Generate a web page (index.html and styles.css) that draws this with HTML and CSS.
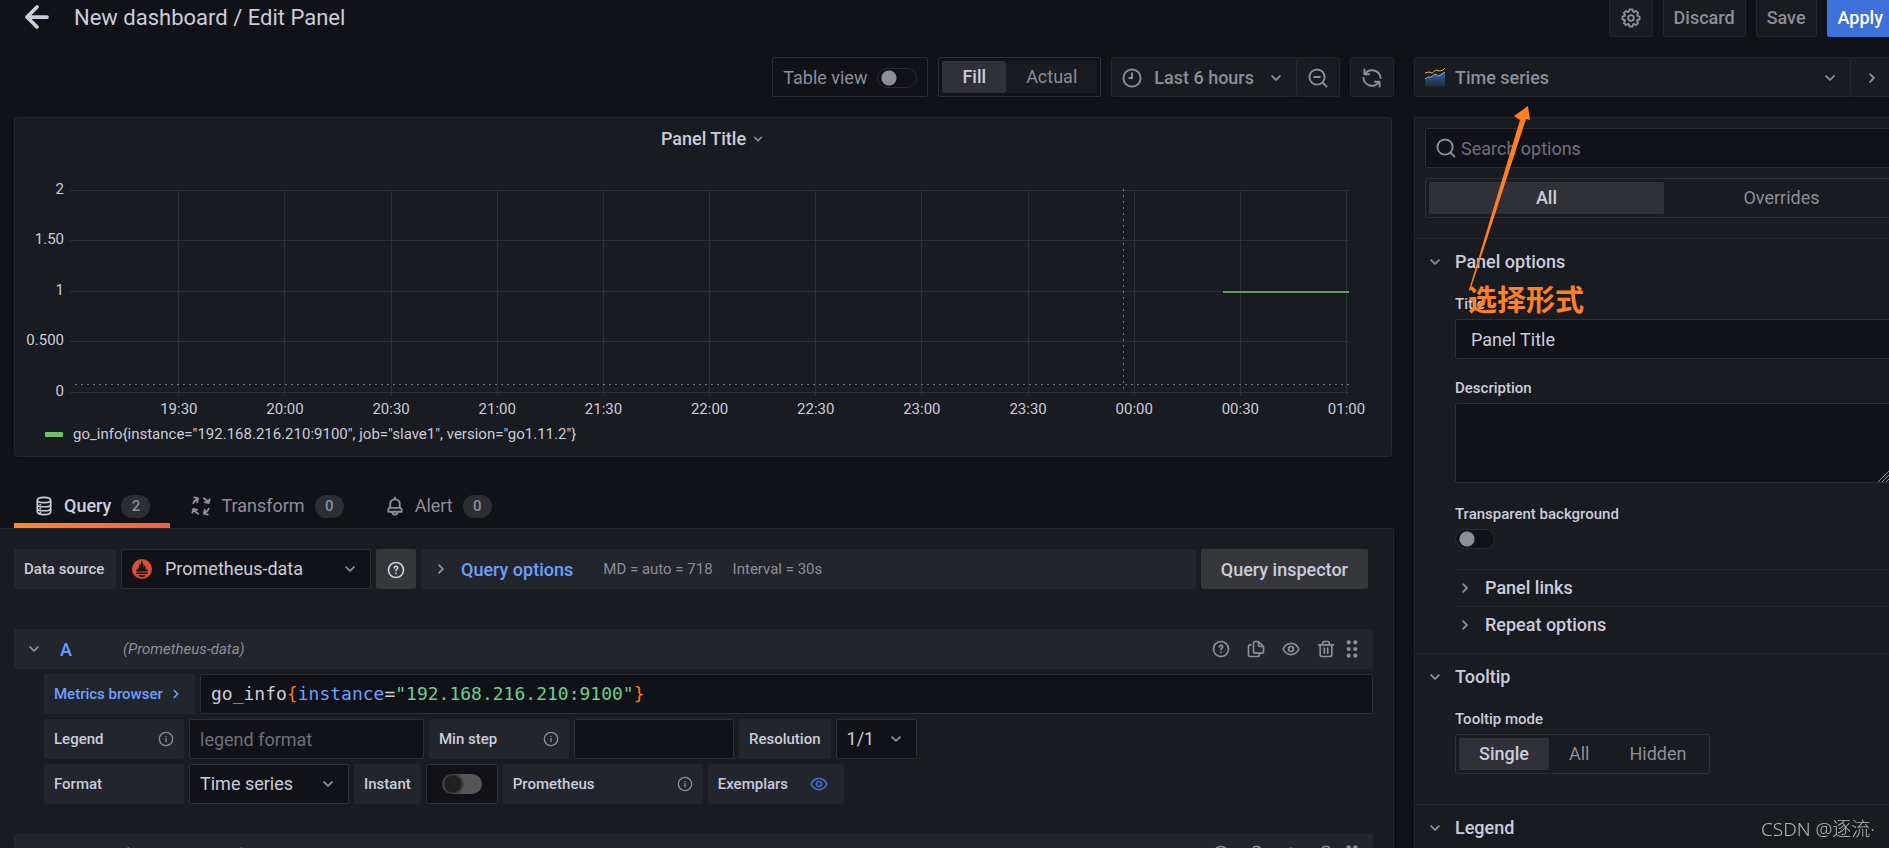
FILE: index.html
```
<!DOCTYPE html>
<html lang="en">

<head>
    <meta charset="utf-8" />
    <title>New dashboard / Edit Panel</title>
    <link rel="stylesheet" href="styles.css">
</head>

<body>
    <!-- icon sprite -->
    <svg class="sprite" aria-hidden="true">
        <symbol id="arrow-left" viewBox="0 0 24 24"><path d="M20 12H5M12 4l-8 8 8 8" fill="none" stroke="currentColor" stroke-width="3" stroke-linecap="round" stroke-linejoin="round" /></symbol>
        <symbol id="angle-down" viewBox="1 1 22 22"><path d="M17,9.17a1,1,0,0,0-1.41,0L12,12.71,8.46,9.17a1,1,0,0,0-1.41,0,1,1,0,0,0,0,1.42l4.24,4.24a1,1,0,0,0,1.42,0L17,10.59A1,1,0,0,0,17,9.17Z" /></symbol>
        <symbol id="angle-right" viewBox="1 1 22 22"><path d="M14.83,11.29,10.59,7.05a1,1,0,0,0-1.42,0,1,1,0,0,0,0,1.41L12.71,12,9.17,15.54a1,1,0,0,0,0,1.41,1,1,0,0,0,.71.29,1,1,0,0,0,.71-.29l4.24-4.24A1,1,0,0,0,14.83,11.29Z" /></symbol>
        <symbol id="cog" viewBox="1.5 1.5 21 21"><path d="M21.32,9.55l-1.89-.63.89-1.78A1,1,0,0,0,20.13,6L18,3.87a1,1,0,0,0-1.15-.19l-1.78.89-.63-1.89A1,1,0,0,0,13.5,2h-3a1,1,0,0,0-.95.68L8.92,4.57,7.14,3.68A1,1,0,0,0,6,3.87L3.87,6a1,1,0,0,0-.19,1.15l.89,1.78-1.89.63A1,1,0,0,0,2,10.5v3a1,1,0,0,0,.68.95l1.89.63-.89,1.78A1,1,0,0,0,3.87,18L6,20.13a1,1,0,0,0,1.15.19l1.78-.89.63,1.89a1,1,0,0,0,.95.68h3a1,1,0,0,0,.95-.68l.63-1.89,1.78.89A1,1,0,0,0,18,20.13L20.13,18a1,1,0,0,0,.19-1.15l-.89-1.78,1.89-.63A1,1,0,0,0,22,13.5v-3A1,1,0,0,0,21.32,9.55ZM20,12.78l-1.2.4A2,2,0,0,0,17.64,16l.57,1.14-1.1,1.1L16,17.64a2,2,0,0,0-2.79,1.16l-.4,1.2H11.22l-.4-1.2A2,2,0,0,0,8,17.64l-1.14.57-1.1-1.1L6.36,16A2,2,0,0,0,5.2,13.18L4,12.78V11.22l1.2-.4A2,2,0,0,0,6.36,8L5.79,6.89l1.1-1.1L8,6.36A2,2,0,0,0,10.82,5.2l.4-1.2h1.56l.4,1.2A2,2,0,0,0,16,6.36l1.14-.57,1.1,1.1L17.64,8a2,2,0,0,0,1.16,2.79l1.2.4ZM12,8a4,4,0,1,0,4,4A4,4,0,0,0,12,8Zm0,6a2,2,0,1,1,2-2A2,2,0,0,1,12,14Z" /></symbol>
        <symbol id="clock" viewBox="1.5 1.5 21 21"><g fill="none" stroke="currentColor" stroke-width="2" stroke-linecap="round"><circle cx="12" cy="12" r="9" /><path d="M12 7v5H9" /></g></symbol>
        <symbol id="zoom-out" viewBox="1.5 1.5 21 21"><g fill="none" stroke="currentColor" stroke-width="2" stroke-linecap="round"><circle cx="11" cy="11" r="8" /><path d="M17 17l4 4M8 11h6" /></g></symbol>
        <symbol id="sync" viewBox="1.5 1.5 21 21"><g fill="none" stroke="currentColor" stroke-width="2" stroke-linecap="round" stroke-linejoin="round"><path d="M4 3v5h5M4.5 8A9 9 0 0 1 21 12M20 21v-5h-5M19.5 16A9 9 0 0 1 3 12" /></g></symbol>
        <symbol id="search" viewBox="1.5 1.5 21 21"><g fill="none" stroke="currentColor" stroke-width="2" stroke-linecap="round"><circle cx="11" cy="11" r="8" /><path d="M17 17l4 4" /></g></symbol>
        <symbol id="database" viewBox="1.5 1.5 21 21"><g fill="none" stroke="currentColor" stroke-width="1.8" stroke-linecap="round"><path d="M5 6c0-2 3-3 7-3s7 1 7 3v12c0 2-3 3-7 3s-7-1-7-3zM5 6c0 1.500 3 2.500 7 2.500s7-1 7-2.500M5 10.300c0 1.500 3 2.500 7 2.500s7-1 7-2.500M5 14.500c0 1.500 3 2.500 7 2.500s7-1 7-2.500" /><path d="M8 10.500h.1M8 14.800h.1M8 18.600h.1" /></g></symbol>
        <symbol id="process" viewBox="1.5 1.5 21 21"><g fill="none" stroke="currentColor" stroke-width="2" stroke-linecap="round" stroke-linejoin="round"><path d="M9 4a9 9 0 0 0-5 5M5 3l4 1-1 4M20 9a9 9 0 0 0-5-5M21 5l-1 4-4-1M15 20a9 9 0 0 0 5-5M19 21l-4-1 1-4M4 15a9 9 0 0 0 5 5M3 19l1-4 4 1" /></g></symbol>
        <symbol id="bell" viewBox="1.5 1.5 21 21"><path d="M18,13.18V10a6,6,0,0,0-5-5.91V3a1,1,0,0,0-2,0V4.09A6,6,0,0,0,6,10v3.18A3,3,0,0,0,4,16v2a1,1,0,0,0,1,1H8.14a4,4,0,0,0,7.72,0H19a1,1,0,0,0,1-1V16A3,3,0,0,0,18,13.18ZM8,10a4,4,0,0,1,8,0v3H8Zm4,10a2,2,0,0,1-1.72-1h3.44A2,2,0,0,1,12,20Zm6-3H6V16a1,1,0,0,1,1-1H17a1,1,0,0,1,1,1Z" /></symbol>
        <symbol id="question" viewBox="0 0 24 24"><g fill="none" stroke="currentColor" stroke-width="2" stroke-linecap="round"><circle cx="12" cy="12" r="9" /><path d="M10 9.5a2 2 0 1 1 3 1.7q-1 .6-1 1.8M12 16v.1" /></g></symbol>
        <symbol id="info" viewBox="0 0 24 24"><g fill="none" stroke="currentColor" stroke-width="2" stroke-linecap="round"><circle cx="12" cy="12" r="10" /><path d="M12 11v5M12 8v.1" /></g></symbol>
        <symbol id="copy" viewBox="0 0 24 24"><g fill="none" stroke="currentColor" stroke-width="2" stroke-linecap="round" stroke-linejoin="round"><path d="M15 3h-4a2 2 0 0 0-2 2v10a2 2 0 0 0 2 2h8a2 2 0 0 0 2-2V9zM15 3v4a2 2 0 0 0 2 2h4M6 7H5a2 2 0 0 0-2 2v10a2 2 0 0 0 2 2h9a2 2 0 0 0 2-2" /></g></symbol>
        <symbol id="eye" viewBox="0 0 24 24"><g fill="none" stroke="currentColor" stroke-width="2" stroke-linejoin="round"><path d="M2.5 12C7 3 17 3 21.5 12C17 21 7 21 2.5 12z" /><circle cx="12" cy="12" r="3" /></g></symbol>
        <symbol id="trash" viewBox="0 0 24 24"><g fill="none" stroke="currentColor" stroke-width="2" stroke-linecap="round" stroke-linejoin="round"><path d="M3 7h18M5 7v12a2 2 0 0 0 2 2h10a2 2 0 0 0 2-2V7M8 7V5a2 2 0 0 1 2-2h4a2 2 0 0 1 2 2v2M10 11v6M14 11v6" /></g></symbol>
        <symbol id="drag" viewBox="0 0 24 24"><circle cx="8" cy="4" r="2.5" /><circle cx="16" cy="4" r="2.5" /><circle cx="8" cy="12" r="2.5" /><circle cx="16" cy="12" r="2.5" /><circle cx="8" cy="20" r="2.5" /><circle cx="16" cy="20" r="2.5" /></symbol>
    </svg>

    <div class="app">
        <header class="navbar">
            <button class="back" aria-label="Go back"><svg class="icon icon-xl"><use href="#arrow-left" /></svg></button>
            <h1>New dashboard / Edit Panel</h1>
            <button class="btn btn-icon" aria-label="Dashboard settings"><svg class="icon"><use href="#cog" /></svg></button>
            <button class="btn">Discard</button>
            <button class="btn">Save</button>
            <button class="btn btn-primary">Apply</button>
        </header>

        <div class="editor">
            <main class="main-pane">
                <div class="toolbar">
                    <label class="table-view">Table view <input type="checkbox" class="switch"></label>
                    <div class="radio-group radio-fill">
                        <label><input type="radio" name="size" checked><span>Fill</span></label>
                        <label><input type="radio" name="size"><span>Actual</span></label>
                    </div>
                    <div class="btn-group">
                        <button class="btn time-btn"><svg class="icon"><use href="#clock" /></svg>Last 6 hours<svg class="icon"><use href="#angle-down" /></svg></button>
                        <button class="btn btn-icon" aria-label="Zoom out"><svg class="icon"><use href="#zoom-out" /></svg></button>
                    </div>
                    <button class="btn btn-icon" aria-label="Refresh"><svg class="icon"><use href="#sync" /></svg></button>
                </div>

                <section class="panel">
                    <h2>Panel Title <svg class="icon icon-sm"><use href="#angle-down" /></svg></h2>
                    <svg class="plot">
                        <g class="grid">
                            <line x1="-5" x2="100%" y1="31" y2="31" />
                            <line x1="-5" x2="100%" y1="81" y2="81" />
                            <line x1="-5" x2="100%" y1="132" y2="132" />
                            <line x1="-5" x2="100%" y1="182" y2="182" />
                            <line x1="-5" x2="100%" y1="233" y2="233" />
                            <line x1="8.15%" x2="8.15%" y1="31" y2="237" />
                            <line x1="16.48%" x2="16.48%" y1="31" y2="237" />
                            <line x1="24.81%" x2="24.81%" y1="31" y2="237" />
                            <line x1="33.14%" x2="33.14%" y1="31" y2="237" />
                            <line x1="41.48%" x2="41.48%" y1="31" y2="237" />
                            <line x1="49.81%" x2="49.81%" y1="31" y2="237" />
                            <line x1="58.14%" x2="58.14%" y1="31" y2="237" />
                            <line x1="66.47%" x2="66.47%" y1="31" y2="237" />
                            <line x1="74.81%" x2="74.81%" y1="31" y2="237" />
                            <line x1="83.14%" x2="83.14%" y1="31" y2="237" />
                            <line x1="91.47%" x2="91.47%" y1="31" y2="237" />
                            <line x1="99.8%" x2="99.8%" y1="31" y2="237" />
                        </g>
                        <g class="y-labels">
                            <text x="-11" y="35">2</text>
                            <text x="-11" y="85">1.50</text>
                            <text x="-11" y="136">1</text>
                            <text x="-11" y="186">0.500</text>
                            <text x="-11" y="237">0</text>
                        </g>
                        <g class="x-labels">
                            <text x="8.15%" y="255">19:30</text>
                            <text x="16.48%" y="255">20:00</text>
                            <text x="24.81%" y="255">20:30</text>
                            <text x="33.14%" y="255">21:00</text>
                            <text x="41.48%" y="255">21:30</text>
                            <text x="49.81%" y="255">22:00</text>
                            <text x="58.14%" y="255">22:30</text>
                            <text x="66.47%" y="255">23:00</text>
                            <text x="74.81%" y="255">23:30</text>
                            <text x="83.14%" y="255">00:00</text>
                            <text x="91.47%" y="255">00:30</text>
                            <text x="99.8%" y="255">01:00</text>
                        </g>
                        <g class="crosshair">
                            <line x1="82.3%" x2="82.3%" y1="30" y2="232" />
                            <line x1="0" x2="100%" y1="225" y2="225" />
                        </g>
                        <line class="series" x1="90.1%" x2="100%" y1="133" y2="133" />
                    </svg>
                    <div class="legend"><span class="swatch"></span>go_info{instance="192.168.216.210:9100", job="slave1", version="go1.11.2"}</div>
                </section>

                <nav class="tabs">
                    <a href="#" class="tab active"><svg class="icon"><use href="#database" /></svg>Query<span class="count">2</span></a>
                    <a href="#" class="tab"><svg class="icon"><use href="#process" /></svg>Transform<span class="count">0</span></a>
                    <a href="#" class="tab"><svg class="icon"><use href="#bell" /></svg>Alert<span class="count">0</span></a>
                </nav>

                <div class="tab-content">
                    <div class="row source-row">
                        <label class="form-label w-102" for="datasource">Data source</label>
                        <div class="ds-picker">
                            <svg class="prom-logo" viewBox="0 0 20 20">
                                <circle cx="10" cy="10" r="10" fill="#da4e31" />
                                <path d="M4 12.5h12c-.2-.9-1-1.5-.9-3.2-.4.9-.9 1.4-1.7 1.8.6-2.2.3-3.4-.9-5.1 0 1.2-.3 1.9-.9 2.5.1-2.8-.6-4.7-2-7.500-.2 2.500-1 3.700-1.400 5.200-.3-.6-.3-1-.3-1.700-1.100 1.900-2 3.900-1.100 6.600-.9-.4-1.400-1-1.700-1.800 0 1.700-.9 2.400-1.100 3.200zM4.200 13.500h11.600v1.600H4.200zM6.500 16h7c-.6 1.500-2 2.200-3.500 2.200S7.100 17.500 6.500 16z" fill="#111217" />
                            </svg>
                            <select id="datasource"><option>Prometheus-data</option></select>
                        </div>
                        <button class="help-btn" aria-label="Data source help"><svg class="icon"><use href="#question" /></svg></button>
                        <button class="query-options">
                            <svg class="icon"><use href="#angle-right" /></svg>
                            <span class="link">Query options</span>
                            <small>MD = auto = 718</small>
                            <small>Interval = 30s</small>
                        </button>
                        <button class="inspector">Query inspector</button>
                    </div>

                    <div class="query-header">
                        <svg class="icon"><use href="#angle-down" /></svg>
                        <b>A</b>
                        <em>(Prometheus-data)</em>
                        <div class="actions">
                            <button aria-label="Help"><svg class="icon"><use href="#question" /></svg></button>
                            <button aria-label="Duplicate"><svg class="icon"><use href="#copy" /></svg></button>
                            <button aria-label="Disable"><svg class="icon"><use href="#eye" /></svg></button>
                            <button aria-label="Remove"><svg class="icon"><use href="#trash" /></svg></button>
                            <svg class="icon drag"><use href="#drag" /></svg>
                        </div>
                    </div>
                    <div class="query-body">
                        <div class="row">
                            <button class="form-label metrics">Metrics browser <svg class="icon icon-sm"><use href="#angle-right" /></svg></button>
                            <div class="code" role="textbox" contenteditable="true" spellcheck="false" aria-label="Query">go_info<span class="brace">{</span><span class="attr">instance</span>=<span class="str">"192.168.216.210:9100"</span><span class="brace">}</span></div>
                        </div>
                        <div class="row">
                            <label class="form-label w-140" for="legend">Legend <svg class="icon icon-info"><use href="#info" /></svg></label>
                            <input class="field w-235" id="legend" type="text" placeholder="legend format">
                            <label class="form-label w-140" for="step">Min step <svg class="icon icon-info"><use href="#info" /></svg></label>
                            <input class="field w-160" id="step" type="text">
                            <label class="form-label" for="resolution">Resolution</label>
                            <select class="field w-81" id="resolution"><option>1/1</option></select>
                        </div>
                        <div class="row">
                            <label class="form-label w-140" for="format">Format</label>
                            <select class="field w-160" id="format"><option>Time series</option></select>
                            <label class="form-label" for="instant">Instant</label>
                            <div class="field switch-box"><input type="checkbox" class="old-switch" id="instant"></div>
                            <div class="form-label w-200">Prometheus <svg class="icon icon-info"><use href="#info" /></svg></div>
                            <div class="form-label exemplars">Exemplars <button aria-label="Toggle exemplars"><svg class="icon"><use href="#eye" /></svg></button></div>
                        </div>
                    </div>

                    <div class="query-header">
                        <svg class="icon"><use href="#angle-down" /></svg>
                        <b>B</b>
                        <em>(Prometheus-data)</em>
                        <div class="actions">
                            <button aria-label="Help"><svg class="icon"><use href="#question" /></svg></button>
                            <button aria-label="Duplicate"><svg class="icon"><use href="#copy" /></svg></button>
                            <button aria-label="Disable"><svg class="icon"><use href="#eye" /></svg></button>
                            <button aria-label="Remove"><svg class="icon"><use href="#trash" /></svg></button>
                            <svg class="icon drag"><use href="#drag" /></svg>
                        </div>
                    </div>
                </div>
            </main>

            <aside class="side-pane">
                <div class="btn-group viz-picker">
                    <button class="btn viz-btn">
                        <svg class="viz-icon" viewBox="0 0 20 20">
                            <defs><linearGradient id="area" x1="0" y1="0" x2="0" y2="1"><stop offset="0" stop-color="#3865ab" /><stop offset="1" stop-color="#3865ab" stop-opacity=".15" /></linearGradient></defs>
                            <path d="M0 11l3-2 3 0 4-3 4 2 3-3 3-1v15H0z" fill="url(#area)" />
                            <path d="M0 11l3-2h3l4-3 4 2 3-2 3-2" fill="none" stroke="#84aff1" />
                            <path d="M0 5l4-1 3 1 4-3 4 1 3-1 2-2" fill="none" stroke="#f2a81d" />
                        </svg>
                        Time series
                        <svg class="icon"><use href="#angle-down" /></svg>
                    </button>
                    <button class="btn btn-icon" aria-label="Hide options"><svg class="icon"><use href="#angle-right" /></svg></button>
                </div>

                <div class="options">
                    <div class="options-top">
                        <div class="search field"><svg class="icon"><use href="#search" /></svg><input type="text" placeholder="Search options" aria-label="Search options"></div>
                        <div class="radio-group radio-wide">
                            <label><input type="radio" name="filter" checked><span>All</span></label>
                            <label><input type="radio" name="filter"><span>Overrides</span></label>
                        </div>
                    </div>

                    <section class="category">
                        <h3><svg class="icon"><use href="#angle-down" /></svg>Panel options</h3>
                        <div class="category-body">
                            <label class="option-label" for="title">Title</label>
                            <input class="field" id="title" type="text" value="Panel Title">
                            <label class="option-label" for="description">Description</label>
                            <textarea class="field" id="description"></textarea>
                            <label class="option-label" for="transparent">Transparent background</label>
                            <input type="checkbox" class="switch" id="transparent">
                            <div class="nested">
                                <h4><svg class="icon"><use href="#angle-right" /></svg>Panel links</h4>
                                <h4><svg class="icon"><use href="#angle-right" /></svg>Repeat options</h4>
                            </div>
                        </div>
                    </section>

                    <section class="category">
                        <h3><svg class="icon"><use href="#angle-down" /></svg>Tooltip</h3>
                        <div class="category-body tooltip-body">
                            <div class="option-label" id="tooltip-mode">Tooltip mode</div>
                            <div class="radio-group" role="radiogroup" aria-labelledby="tooltip-mode">
                                <label><input type="radio" name="tooltip" checked><span>Single</span></label>
                                <label><input type="radio" name="tooltip"><span>All</span></label>
                                <label><input type="radio" name="tooltip"><span>Hidden</span></label>
                            </div>
                        </div>
                    </section>

                    <section class="category">
                        <h3><svg class="icon"><use href="#angle-down" /></svg>Legend</h3>
                    </section>
                </div>

                <!-- note drawn over the pane -->
                <svg class="note-arrow" viewBox="0 0 62 186"><path d="M0 184L51 14l-6-4L59 0l2 14-4-1L1 185z" fill="#ff7f27" /></svg>
                <div class="note">选择形式</div>
            </aside>
        </div>
    </div>
    <div class="watermark">CSDN @逐流·</div>
</body>

</html>
```
FILE: styles.css
```
* {
    box-sizing: border-box;
}

body {
    margin: 0;
    height: 100vh;
    overflow: hidden;
    background: #111217;
    color: #ccccdc;
    font-family: Roboto, "Noto Sans CJK SC", sans-serif;
    font-size: 18px;
    line-height: 24px;
}

button,
input,
select,
textarea {
    font: inherit;
    color: inherit;
}

button {
    border: 0;
    padding: 0;
    background: none;
}

h1,
h2,
h3,
h4 {
    margin: 0;
    font-weight: 500;
}

.sprite {
    position: absolute;
    width: 0;
    height: 0;
}

.icon {
    width: 20px;
    height: 20px;
    flex: none;
    fill: currentColor;
}

.icon-sm {
    width: 18px;
    height: 18px;
}

.icon-info {
    width: 16px;
    height: 16px;
    color: #8e8e99;
}

.icon-xl {
    width: 30px;
    height: 30px;
}

/* runs a little past the right edge of the window */
.app {
    width: calc(100% + 25px);
}

/* top bar */
.navbar {
    display: flex;
    align-items: flex-end;
    gap: 10px;
    height: 37px;
    padding: 0 20px;
    overflow: hidden;
}

.navbar h1 {
    flex: 1;
    font-size: 22px;
    font-weight: 400;
    line-height: 38px;
}

.back {
    height: 40px;
    width: 44px;
    padding-left: 2px;
    display: flex;
    align-items: center;
}

.btn {
    display: flex;
    align-items: center;
    justify-content: center;
    height: 40px;
    padding: 1px 10px 0;
    border: 1px solid #24262b;
    border-radius: 2px;
    background: #181b1f;
    color: #8e8e99;
    font-weight: 500;
    white-space: nowrap;
}

.btn-icon {
    width: 44px;
}

.btn-primary {
    border-color: #3d71d9;
    background: #3d71d9;
    color: #fff;
}

.btn-group {
    display: flex;
}

.btn-group .btn + .btn {
    margin-left: -1px;
}

.editor {
    display: flex;
    gap: 20px;
    padding-top: 20px;
}

.main-pane {
    flex: 1;
    min-width: 0;
}

.toolbar {
    display: flex;
    justify-content: flex-end;
    gap: 10px;
}

.table-view {
    display: flex;
    align-items: center;
    gap: 10px;
    height: 40px;
    padding: 1px 10px 0;
    border: 1px solid #2a2c32;
    border-radius: 2px;
    color: #8e8e99;
}

.time-btn {
    gap: 12px;
}

.switch {
    appearance: none;
    display: block;
    width: 40px;
    height: 20px;
    margin: 0;
    border: 1px solid #2a2c32;
    border-radius: 10px;
    background: radial-gradient(circle at 11px 9px, #8e8e99 7px, transparent 8px) #111217;
}

.radio-group {
    display: inline-flex;
    height: 40px;
    padding: 3px;
    border: 1px solid #2f3136;
    border-radius: 2px;
}

.radio-group input {
    position: absolute;
    opacity: 0;
}

.radio-group span {
    display: block;
    padding: 0 20px;
    border-radius: 2px;
    line-height: 32px;
    text-align: center;
    color: #8e8e99;
}

.radio-group input:checked + span {
    background: #2f3136;
    color: #ccccdc;
    font-weight: 500;
}

.radio-fill span {
    background: #181b1f;
}

.radio-wide {
    display: flex;
}

.radio-wide label {
    flex: 1;
}

/* graph panel */
.panel {
    margin: 20px 2px 0 14px;
    height: 340px;
    border: 1px solid #24262b;
    border-radius: 3px;
    background: #181b1f;
}

.panel h2 {
    display: flex;
    align-items: center;
    justify-content: center;
    gap: 3px;
    padding: 9px 0 0 22px;
    font-size: 18px;
}

.panel h2 .icon {
    color: #8e8e99;
}

.plot {
    display: block;
    width: calc(100% - 102px);
    height: 263px;
    margin: 8px 42px 0 60px;
    overflow: visible;
}

.grid line {
    stroke: #2c2f33;
    shape-rendering: crispEdges;
}

.plot text {
    fill: #ccccdc;
    font-size: 15px;
}

.y-labels {
    text-anchor: end;
}

.x-labels {
    text-anchor: middle;
}

.crosshair line {
    stroke: #607d8b;
    stroke-dasharray: 2 4;
    shape-rendering: crispEdges;
}

.series {
    stroke: #62a05a;
    stroke-width: 2;
    shape-rendering: crispEdges;
}

.legend {
    display: flex;
    align-items: center;
    gap: 10px;
    padding-left: 30px;
    font-size: 15px;
}

.swatch {
    width: 18px;
    height: 5px;
    border-radius: 1px;
    background: #73bf69;
}

/* tabs */
.tabs {
    display: flex;
    gap: 1px;
    height: 71px;
    padding: 23px 0 0 14px;
}

.tab {
    display: flex;
    align-items: center;
    gap: 10px;
    height: 48px;
    padding: 4px 20px 0;
    color: #8e8e99;
    text-decoration: none;
}

.tab.active {
    padding-top: 9px;
    border-bottom: 5px solid;
    border-image: linear-gradient(to right, #ff8833, #f55f3e) 1;
    color: #ccccdc;
    font-weight: 500;
}

.count {
    min-width: 29px;
    padding: 0 8px;
    border-radius: 12px;
    background: #2c2e34;
    color: #8e8e99;
    font-size: 15px;
    font-weight: 500;
    line-height: 23px;
    text-align: center;
}

.tab-content {
    height: 340px;
    padding: 20px 20px 0 14px;
    border: 1px solid #24262b;
    border-left: 0;
    background: #181b1f;
}

.row {
    display: flex;
    gap: 5px;
    margin-bottom: 5px;
}

.source-row {
    margin: 0 5px 40px 0;
}

.form-label {
    display: flex;
    align-items: center;
    justify-content: space-between;
    height: 40px;
    padding: 0 10px;
    border-radius: 2px;
    background: #22252b;
    font-size: 15px;
    font-weight: 500;
    white-space: nowrap;
}

.field,
.ds-picker {
    height: 40px;
    padding: 0 10px;
    border: 1px solid #2d2f34;
    border-radius: 2px;
    background-color: #111217;
}

.field::placeholder,
.search input::placeholder {
    color: #70707b;
    opacity: 1;
}

select {
    appearance: none;
    background: url("data:image/svg+xml,%3Csvg xmlns='http://www.w3.org/2000/svg' width='20' height='20' viewBox='1 1 22 22' fill='%238e8e99'%3E%3Cpath d='M17,9.17a1,1,0,0,0-1.41,0L12,12.71,8.46,9.17a1,1,0,0,0-1.41,0,1,1,0,0,0,0,1.42l4.24,4.24a1,1,0,0,0,1.42,0L17,10.59A1,1,0,0,0,17,9.17Z'/%3E%3C/svg%3E") no-repeat right 10px center;
}

.ds-picker {
    display: flex;
    align-items: center;
    gap: 13px;
    width: 250px;
    padding-right: 0;
}

.ds-picker select {
    flex: 1;
    height: 100%;
    border: 0;
}

.prom-logo {
    width: 20px;
    height: 20px;
}

.help-btn,
.inspector {
    height: 40px;
    padding: 1px 10px 0;
    border-radius: 2px;
    background: #35373b;
}

.help-btn {
    display: flex;
    align-items: center;
}

.inspector {
    padding: 1px 20px 0;
    font-weight: 500;
}

.query-options {
    flex: 1;
    display: flex;
    align-items: center;
    padding-left: 10px;
    border-radius: 2px;
    background: #22252b;
    color: #8e8e99;
}

.query-options .link {
    padding: 1px 10px 0;
    color: #6e9fff;
    font-weight: 500;
}

.query-options small {
    padding-left: 20px;
    font-size: 15px;
}

.query-header {
    display: flex;
    align-items: center;
    height: 40px;
    margin-bottom: 5px;
    padding: 0 11px 0 10px;
    border-radius: 2px;
    background: #22252b;
    color: #8e8e99;
}

.query-header b {
    width: 63px;
    margin-left: 16px;
    padding-top: 2px;
    color: #6e9fff;
    font-weight: 500;
}

.query-header em {
    flex: 1;
    font-size: 15px;
}

.actions {
    display: flex;
    align-items: center;
    gap: 15px;
}

.actions button {
    display: flex;
}

.actions .drag {
    margin-left: -9px;
}

.query-body {
    padding: 0 0 25px 30px;
}

.metrics {
    width: 151px;
    color: #6e9fff;
}

.code {
    flex: 1;
    height: 40px;
    padding: 0 10px;
    border: 1px solid #2d2f34;
    border-radius: 2px;
    background: #111217;
    font-family: "DejaVu Sans Mono", monospace;
    font-size: 18px;
    line-height: 38px;
}

.brace {
    color: #ff780a;
}

.attr {
    color: #6e9fff;
}

.str {
    color: #6ccf8e;
}

.w-81 {
    width: 81px;
}

.w-102 {
    width: 102px;
}

.w-140 {
    width: 140px;
}

.w-160 {
    width: 160px;
}

.w-200 {
    width: 200px;
}

.w-235 {
    width: 235px;
}

.switch-box {
    display: flex;
    align-items: center;
    padding: 0 15px;
}

.old-switch {
    appearance: none;
    width: 40px;
    height: 20px;
    margin: 0;
    border-radius: 10px;
    background: radial-gradient(circle at 11px 10px, #1f1f20 8px, #3a3a3c 9px, #555 12px);
}

.exemplars {
    gap: 21px;
    padding-right: 15px;
    border-radius: 4px;
}

.exemplars button {
    display: flex;
    color: #3d71d9;
}

/* options pane */
.side-pane {
    position: relative;
    flex: none;
    width: 500px;
}

.viz-picker {
    padding-right: 20px;
}

.viz-btn {
    flex: 1;
    gap: 10px;
}

.viz-btn .icon {
    margin-left: auto;
}

.viz-icon {
    width: 20px;
    height: 20px;
}

.options {
    height: 740px;
    margin-top: 20px;
    border: 1px solid #24262b;
    background: #181b1f;
}

.options-top {
    display: grid;
    gap: 10px;
    padding: 10px 10px 20px;
}

.search {
    display: flex;
    align-items: center;
    gap: 5px;
}

.search .icon {
    color: #8e8e99;
}

.search input {
    flex: 1;
    padding: 1px 0 0;
    border: 0;
    background: none;
}

.category {
    border-top: 1px solid #24262b;
}

.category h3,
.nested h4 {
    display: flex;
    align-items: center;
    gap: 10px;
    font-size: 18px;
    line-height: 24px;
}

.category h3 {
    padding: 11px 10px 10px;
}

.category h3 .icon,
.nested .icon {
    color: #8e8e99;
}

.category-body {
    display: flex;
    flex-direction: column;
    padding: 10px 20px 10px 40px;
}

.option-label {
    margin-bottom: 5px;
    font-size: 15px;
    font-weight: 500;
    line-height: 20px;
}

.category-body .field {
    margin-bottom: 19px;
    padding: 0 15px;
}

.category-body textarea.field {
    height: 80px;
    margin-bottom: 21px;
}

/* larger resize grip */
textarea::-webkit-scrollbar {
    width: 20px;
    height: 20px;
}

textarea::-webkit-resizer {
    background: linear-gradient(135deg, transparent 52%, #8e8e99 52%, #8e8e99 55%, transparent 55%, transparent 65%, #8e8e99 65%, #8e8e99 68%, transparent 68%, transparent 78%, #8e8e99 78%, #8e8e99 81%, transparent 81%);
}

.nested {
    margin-top: 20px;
}

.nested h4 {
    height: 37px;
    border-top: 1px solid #24262b;
}

.tooltip-body {
    align-items: flex-start;
    padding-bottom: 30px;
}

.note-arrow {
    position: absolute;
    left: 55px;
    top: 49px;
    width: 62px;
    height: 186px;
}

.note {
    position: absolute;
    left: 54px;
    top: 224px;
    color: #ff7f27;
    font-size: 29px;
    font-weight: 700;
    line-height: 40px;
}

.watermark {
    position: fixed;
    right: 14px;
    bottom: 5px;
    color: #b9b9bd;
    font-family: "Noto Sans", "Noto Sans CJK SC", sans-serif;
    font-size: 19px;
    font-weight: 300;
    line-height: 28px;
}
```
